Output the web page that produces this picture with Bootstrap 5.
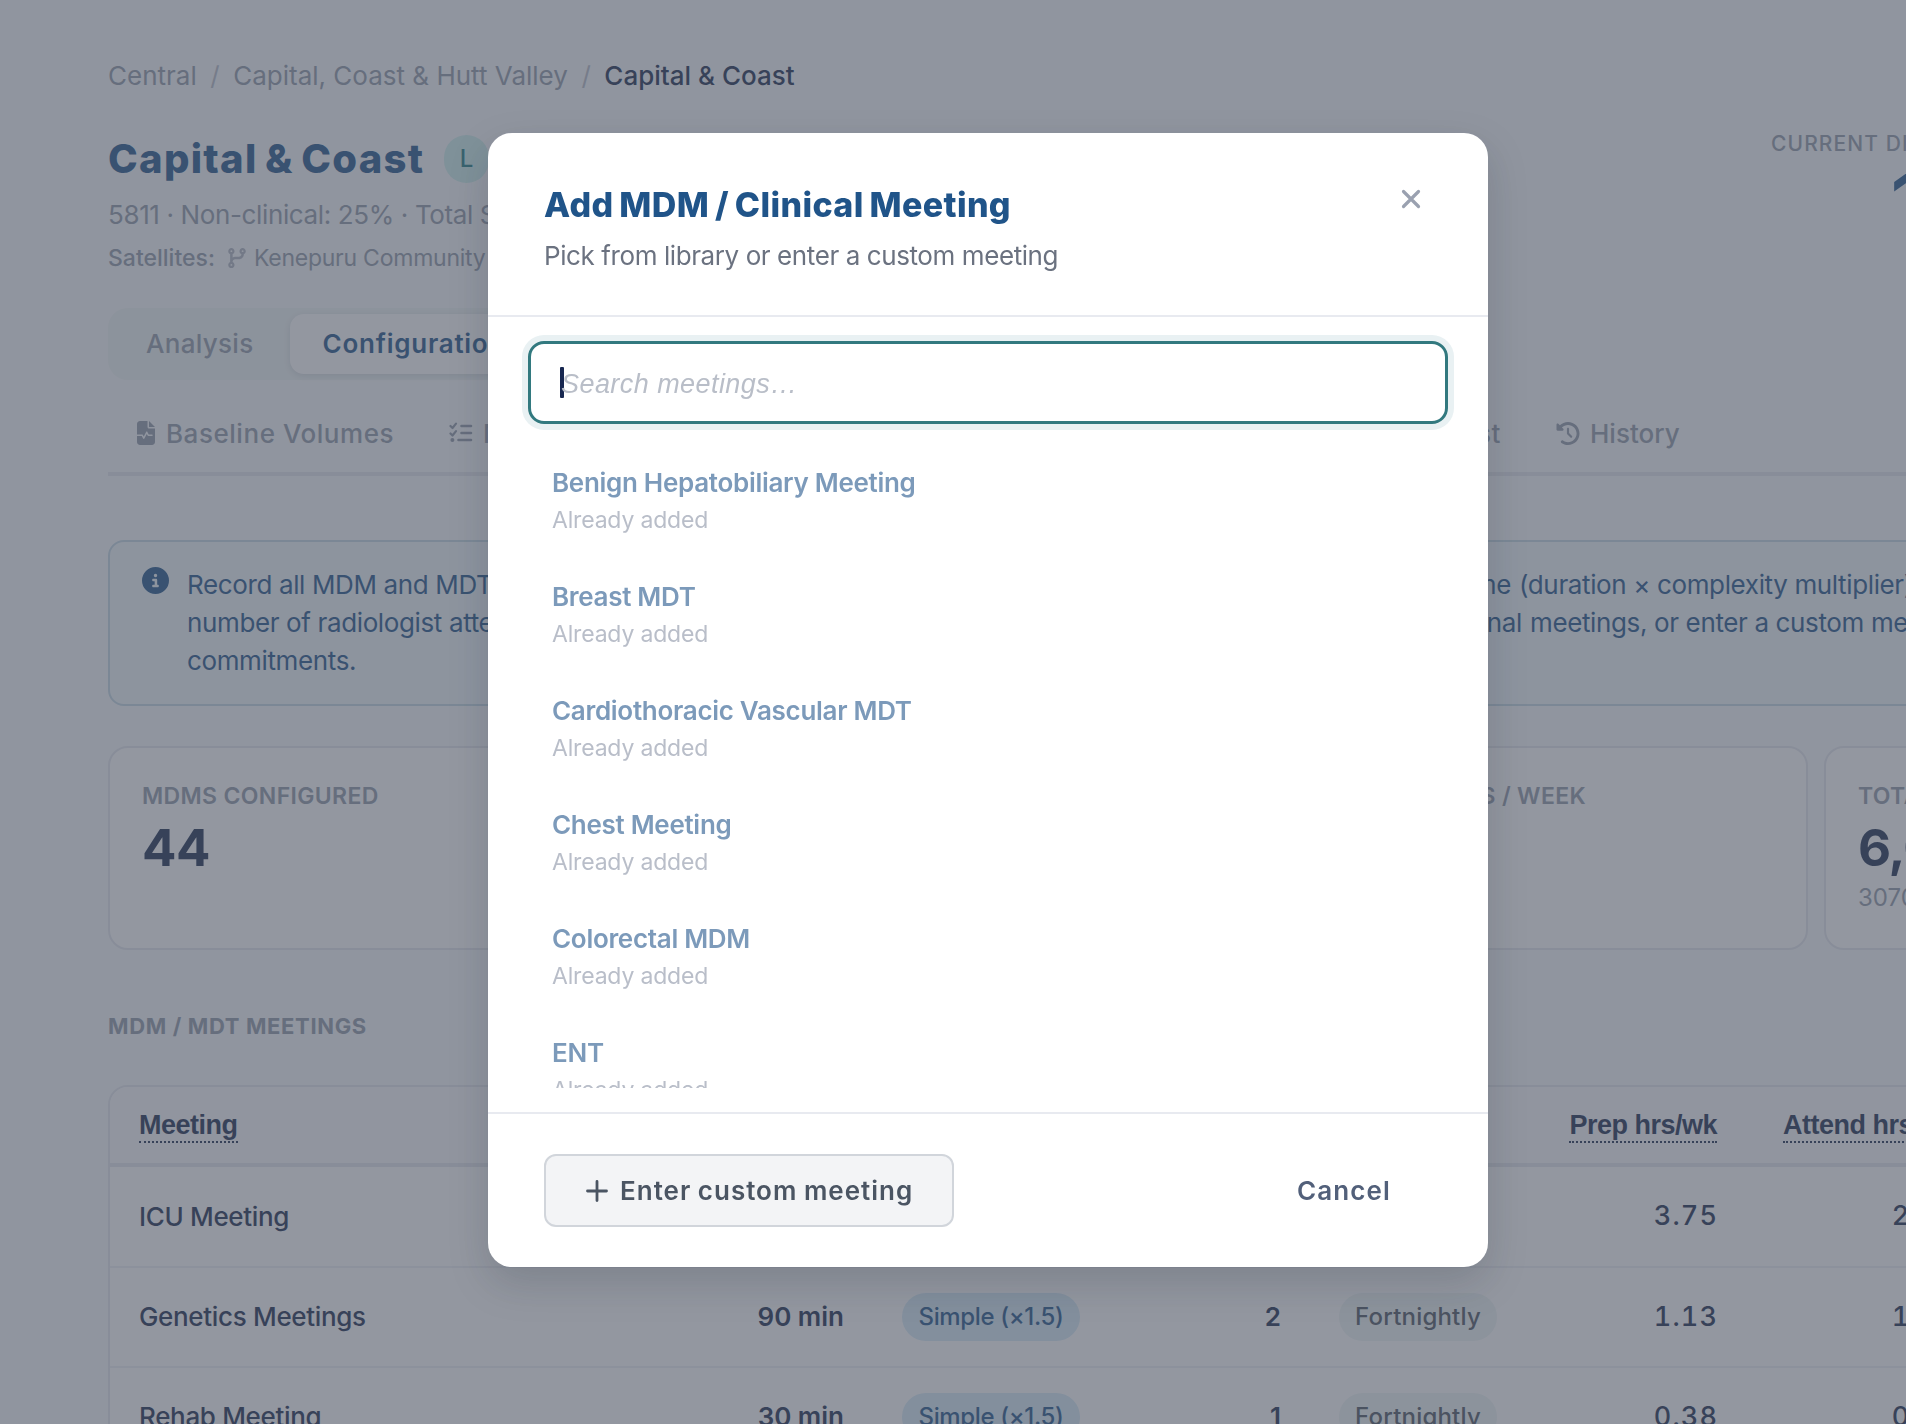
<!DOCTYPE html>
<html lang="en">
<head>
<meta charset="utf-8">
<meta name="viewport" content="width=device-width, initial-scale=1">
<title>Capital &amp; Coast – Configuration</title>
<link href="https://cdn.jsdelivr.net/npm/bootstrap@5.3.0/dist/css/bootstrap.min.css" rel="stylesheet">
<style>
:root{--navy:#1a2b4e;--blue:#1f5489;--grey:#8f98a8;--line:#e4e6ed}
html,body{overflow:hidden;height:1424px}
body{font-family:Inter,"Liberation Sans",sans-serif;font-size:26px;color:var(--navy);background:#f8fafc;white-space:nowrap}
svg{display:block;flex:none}
.page{width:2380px;padding:56px 0 0 108px}
.crumbs{line-height:40px;color:var(--grey);margin-bottom:32px}
.crumbs .sep{color:#b6bcc8;width:36.500px;text-align:center}
.crumbs .here{color:var(--navy);font-weight:500}
.site-title{font-size:40px;font-weight:800;line-height:48px;color:var(--blue);letter-spacing:1.300px;word-spacing:-2.500px}
.lvl{height:48px;width:45px;border-radius:24px;background:#cdf0ee;color:#1c7c84;font-weight:500;font-size:24px}
.title-row{width:381px}
.meta{line-height:40px;margin-top:12px;color:var(--grey);letter-spacing:-.370px}
.sats{line-height:32px;margin-top:7px;font-size:23px;color:var(--grey)}
.sats .lead-in{font-weight:500}
.sats .place{letter-spacing:-.240px}
.sats svg{margin:0 8px 0 13px;opacity:.7}
.stat-side{width:609px}
.stat-cap{font-size:21px;line-height:32px;font-weight:500;color:var(--grey);letter-spacing:1.100px}
.stat-num{font-size:70px;line-height:80px;font-weight:700;color:var(--blue);padding-left:120px}
.seg{height:72px;width:500px;padding:6px 6px 6px 38px;border-radius:20px;background:#eef4f4;margin-top:34px;color:var(--grey);font-weight:500;line-height:60px;letter-spacing:.300px}
.seg .on{width:280px;margin-left:37px;padding-left:32px;border-radius:14px;background:#fff;color:var(--blue);font-weight:600;box-shadow:0 2px 6px rgba(20,30,60,.12);letter-spacing:.750px}
.subnav{height:80px;margin-top:16px;border-bottom:4px solid var(--line);padding:0 0 2px 29px;color:var(--grey);font-weight:500;letter-spacing:.540px}
.subnav .grp{width:1364px}
.note{height:166px;border:2px solid #c3d8e4;border-radius:16px;background:#f0f7fb;margin-top:64px;padding:24px 32px;line-height:38px;color:var(--blue);letter-spacing:-.370px}
.note svg{margin:1px 18px 0 0}
.note .l1{width:1332px;padding-right:8px}
.note .l2{width:1343px;padding-right:8px}
.tiles{margin-top:40px;gap:16px}
.tile{width:556px;height:204px;border:2px solid var(--line);border-radius:20px;background:#fff;padding:32px;flex:none}
.tile .cap{font-size:23px;font-weight:600;line-height:32px;color:var(--grey);letter-spacing:.350px}
.tile .num{font-size:51px;font-weight:700;line-height:56px;margin-top:8px;letter-spacing:-.500px}
.tile .num.tight{letter-spacing:-1px}
.tile .sub{font-size:24px;line-height:32px;margin-top:6px;color:var(--grey)}
.sect{font-size:22px;font-weight:700;line-height:32px;margin-top:60px;color:var(--grey);letter-spacing:.650px}
.tbl{margin-top:43px;border:2px solid var(--line);border-radius:20px;background:#fff;overflow:hidden;height:420px}
.tbl table{table-layout:fixed;width:2268px;border-collapse:separate;border-spacing:0}
.tbl th{height:80px;border-bottom:4px solid var(--line);background:#f9fafc;padding:0 29px;font-family:"Liberation Sans",sans-serif;font-weight:700;font-size:27px;letter-spacing:-.500px}
.tbl th span{display:inline-block;line-height:32px;border-bottom:2px dotted var(--navy);padding-top:2px}
.tbl td{height:100px;border-bottom:2px solid #eef0f5;padding:0 29px}
.tbl tr.first td{height:101px}
.nm{font-weight:500;letter-spacing:-.330px}
.val{font-weight:600;text-align:right}
.tbl td.nm,.tbl td.val{padding-bottom:1px}
.hrs{font-weight:500;text-align:right;letter-spacing:1.100px;font-size:27px;font-variant-numeric:tabular-nums}
.tbl td.hrs{padding-right:28px}
.pill{display:inline-flex;align-items:center;justify-content:center;height:48px;border-radius:24px;font-weight:500;font-size:24px;vertical-align:middle}
.pill.s{background:#d6ebf8;color:var(--blue);width:178px;letter-spacing:-.370px}
.pill.f{background:#eef4f4;color:#4b5563;width:158px;letter-spacing:.200px}
.modal-backdrop{--bs-backdrop-bg:rgb(75,82,97);--bs-backdrop-opacity:.6}
.modal-dialog{width:1000px;max-width:none;margin:133px 0 0 488px}
.modal-content{height:1134px;border:0;border-radius:24px;background:#fff;box-shadow:0 16px 40px rgba(20,28,40,.17)}
.modal-header{height:184px;padding:48px 56px 0;border-bottom:2px solid #e8eaf0;align-items:flex-start}
.modal-title{font-size:34px;font-weight:800;line-height:48px;color:#205489;letter-spacing:.370px;word-spacing:-2px}
.m-sub{line-height:36px;margin-top:9px;color:#6b7280;letter-spacing:-.410px}
.x-btn{border:0;background:none;padding:0;margin:8px 11px 0 0}
.modal-body{padding:24px 40px;height:795px;flex:none}
.find{height:83px;border:3px solid #32797f;border-radius:16px;box-shadow:0 0 0 6px #e9f1f3;padding:0 29px}
.find .caret{width:4px;height:31px;background:#172750;border-radius:1px}
.find .ph{font-family:"Liberation Sans",sans-serif;font-style:italic;font-size:27px;color:#b9bec8;margin-left:-3px;padding-top:3px;letter-spacing:.440px}
.lib{margin-top:21px;height:643px;overflow:hidden}
.lib li{height:114px;padding:20px 24px 0}
.lib b{display:block;font-weight:600;line-height:36px;color:#7c9aba;letter-spacing:-.300px}
.lib small{display:block;font-size:23px;line-height:32px;margin-top:3px;color:#b9bec9;letter-spacing:-.180px}
.modal-footer{flex-wrap:nowrap;height:155px;padding:40px 56px;border-top:2px solid #e8eaf0;justify-content:space-between}
.modal-footer>*{margin:0}
.btn-x,.btn-x:hover{height:73px;font-size:26px;font-weight:600;border:2px solid #d1d5db;border-radius:12px;background:#f3f4f6;color:#4b5563;width:410px;padding:0 0 0 40px;letter-spacing:1px;word-spacing:-1px}
.btn-x svg{margin-right:12px}
.btn-c{height:73px;font-size:26px;font-weight:600;color:#52607a;padding:0 40px;letter-spacing:1.100px}
</style>
<script src="https://cdn.jsdelivr.net/npm/bootstrap@5.3.0/dist/js/bootstrap.bundle.min.js"></script>
</head>
<body>
<main class="page">
  <nav class="crumbs d-flex"><span>Central</span><span class="sep">/</span><span>Capital, Coast &amp; Hutt Valley</span><span class="sep">/</span><span class="here">Capital &amp; Coast</span></nav>

  <header class="d-flex justify-content-between">
    <div style="padding-top:7px">
      <div class="title-row d-flex justify-content-between"><span class="site-title">Capital &amp; Coast</span><span class="lvl d-flex align-items-center justify-content-center">L</span></div>
      <div class="meta">5811 · Non-clinical: 25% · Total S</div>
      <div class="sats d-flex align-items-center"><span class="lead-in">Satellites:</span><svg width="18" height="20" viewBox="0 0 448 512" fill="currentColor"><path d="M80 104a24 24 0 1 0 0-48 24 24 0 1 0 0 48zm80-24c0 32.800-19.700 61-48 73.300v87.800c18.800-10.900 40.700-17.100 64-17.100h96c35.300 0 64-28.700 64-64v-6.700C307.700 141 288 112.800 288 80c0-44.200 35.800-80 80-80s80 35.800 80 80c0 32.800-19.700 61-48 73.300V160c0 70.700-57.300 128-128 128H176c-35.300 0-64 28.700-64 64v6.700c28.300 12.300 48 40.500 48 73.300c0 44.200-35.800 80-80 80s-80-35.800-80-80c0-32.800 19.700-61 48-73.300V352 153.300C19.700 141 0 112.800 0 80C0 35.800 35.800 0 80 0s80 35.800 80 80zm232 0a24 24 0 1 0-48 0 24 24 0 1 0 48 0zM80 456a24 24 0 1 0 0-48 24 24 0 1 0 0 48z"/></svg><span class="place">Kenepuru Community</span></div>
    </div>
    <div class="stat-side"><div class="stat-cap">CURRENT DISTRICT</div><div class="stat-num">1</div></div>
  </header>

  <div class="seg d-flex"><span>Analysis</span><span class="on">Configuration</span></div>

  <div class="subnav d-flex align-items-center">
    <div class="grp d-flex align-items-center">
      <svg width="18" height="24" viewBox="32 0 384 512" fill="currentColor"><path d="M96 0C60.700 0 32 28.700 32 64V288H144c6.100 0 11.600 3.400 14.300 8.800L176 332.200l49.700-99.400c2.700-5.400 8.300-8.800 14.300-8.800s11.600 3.400 14.300 8.800L281.900 288H352c8.800 0 16 7.200 16 16s-7.200 16-16 16H272c-6.100 0-11.600-3.400-14.300-8.800L240 275.800l-49.700 99.400c-2.700 5.400-8.300 8.800-14.300 8.800s-11.600-3.400-14.300-8.800L134.100 320H32V448c0 35.300 28.700 64 64 64H352c35.300 0 64-28.700 64-64V160H288c-17.700 0-32-14.300-32-32V0H96zM288 0V128H416L288 0z"/></svg>
      <span style="margin:0 55px 0 11px">Baseline Volumes</span>
      <svg width="24" height="22" viewBox="0 0 24 22" fill="none" stroke="currentColor" stroke-width="2.200" stroke-linecap="round" stroke-linejoin="round"><path d="M1.500 4l2 2L7 1.600M1.500 11.500l2 2L7 9.100"/><path d="M12.500 4H22M12.500 11H22M9.500 18H22" stroke-width="2.600"/><circle cx="3.400" cy="18" r="2" fill="currentColor" stroke="none"/></svg>
      <span style="margin-left:10px">M</span>
      <span class="ms-auto">Cost</span>
    </div>
    <svg style="margin:0 10px 0 55px" width="24" height="23" viewBox="0 0 512 512" fill="currentColor"><path d="M75 75L41 41C25.900 25.900 0 36.600 0 57.900V168c0 13.300 10.700 24 24 24H134.100c21.400 0 32.100-25.900 17-41l-30.800-30.800C155 85.500 203 64 256 64c106 0 192 86 192 192s-86 192-192 192c-40.800 0-78.600-12.700-109.700-34.400c-14.500-10.100-34.400-6.600-44.600 7.900s-6.600 34.400 7.900 44.600C151.200 495 201.700 512 256 512c141.400 0 256-114.600 256-256S397.400 0 256 0C185.300 0 121.300 28.700 75 75zm181 53c-13.300 0-24 10.700-24 24V256c0 6.400 2.500 12.500 7 17l72 72c9.400 9.400 24.600 9.400 33.900 0s9.400-24.600 0-33.900l-65-65V152c0-13.300-10.700-24-24-24z"/></svg>
    <span style="letter-spacing:0">History</span>
  </div>

  <div class="note d-flex">
    <svg width="27" height="27" viewBox="0 0 512 512" fill="currentColor"><path d="M256 512A256 256 0 1 0 256 0a256 256 0 1 0 0 512zM216 336h24V272H216c-13.300 0-24-10.700-24-24s10.700-24 24-24h48c13.300 0 24 10.700 24 24v88h8c13.300 0 24 10.700 24 24s-10.700 24-24 24H216c-13.300 0-24-10.700-24-24s10.700-24 24-24zm40-208a32 32 0 1 1 0 64 32 32 0 1 1 0-64z"/></svg>
    <div>
      <div class="d-flex"><span class="l1 d-flex justify-content-between"><span>Record all MDM and MDT</span><span>time</span></span><span>(duration × complexity multiplier)</span></div>
      <div class="d-flex"><span class="l2 d-flex justify-content-between"><span>number of radiologist atte</span><span>regional</span></span><span>meetings, or enter a custom meeting</span></div>
      <div>commitments.</div>
    </div>
  </div>

  <div class="tiles d-flex">
    <div class="tile"><div class="cap">MDMS CONFIGURED</div><div class="num">44</div></div>
    <div class="tile"></div>
    <div class="tile"><div class="cap text-end" style="width:300px">HOURS / WEEK</div></div>
    <div class="tile"><div class="cap">TOTAL</div><div class="num tight">6,098</div><div class="sub">3070</div></div>
  </div>

  <div class="sect">MDM / MDT MEETINGS</div>

  <div class="tbl">
    <table>
      <colgroup><col style="width:480px"><col style="width:283px"><col style="width:236px"><col style="width:201px"><col style="width:216px"><col style="width:220px"><col style="width:238px"><col></colgroup>
      <thead><tr><th><span>Meeting</span></th><th></th><th></th><th></th><th></th><th class="text-end"><span>Prep hrs/wk</span></th><th class="text-end"><span>Attend hrs/wk</span></th><th></th></tr></thead>
      <tbody>
        <tr class="first"><td class="nm">ICU Meeting</td><td></td><td></td><td></td><td></td><td class="hrs">3.75</td><td class="hrs">2.50</td><td></td></tr>
        <tr><td class="nm">Genetics Meetings</td><td class="val">90 min</td><td><span class="pill s">Simple (×1.5)</span></td><td class="val">2</td><td><span class="pill f">Fortnightly</span></td><td class="hrs">1.13</td><td class="hrs">1.50</td><td></td></tr>
        <tr><td class="nm">Rehab Meeting</td><td class="val">30 min</td><td><span class="pill s">Simple (×1.5)</span></td><td class="val">1</td><td><span class="pill f">Fortnightly</span></td><td class="hrs">0.38</td><td class="hrs">0.50</td><td></td></tr>
      </tbody>
    </table>
  </div>
</main>

<div class="modal-backdrop show"></div>
<div class="modal show d-block" tabindex="-1" role="dialog">
  <div class="modal-dialog">
    <div class="modal-content">
      <div class="modal-header">
        <div><div class="modal-title">Add MDM / Clinical Meeting</div><div class="m-sub">Pick from library or enter a custom meeting</div></div>
        <button class="x-btn" aria-label="Close"><svg width="20" height="20" viewBox="0 0 20 20" fill="none" stroke="#9aa1b0" stroke-width="3.200" stroke-linecap="round"><path d="M2.500 2.500l15 15M17.500 2.500l-15 15"/></svg></button>
      </div>
      <div class="modal-body">
        <div class="find d-flex align-items-center"><span class="caret"></span><span class="ph">Search meetings…</span></div>
        <ul class="lib list-unstyled mb-0">
          <li><b>Benign Hepatobiliary Meeting</b><small>Already added</small></li>
          <li><b>Breast MDT</b><small>Already added</small></li>
          <li><b>Cardiothoracic Vascular MDT</b><small>Already added</small></li>
          <li><b>Chest Meeting</b><small>Already added</small></li>
          <li><b>Colorectal MDM</b><small>Already added</small></li>
          <li><b>ENT</b><small>Already added</small></li>
        </ul>
      </div>
      <div class="modal-footer">
        <button class="btn btn-x d-flex align-items-center"><svg width="22" height="22" viewBox="0 0 22 22" fill="none" stroke="currentColor" stroke-width="2.800" stroke-linecap="round"><path d="M11 1.500v19M1.500 11h19"/></svg>Enter custom meeting</button>
        <button class="btn btn-c">Cancel</button>
      </div>
    </div>
  </div>
</div>
</body>
</html>
